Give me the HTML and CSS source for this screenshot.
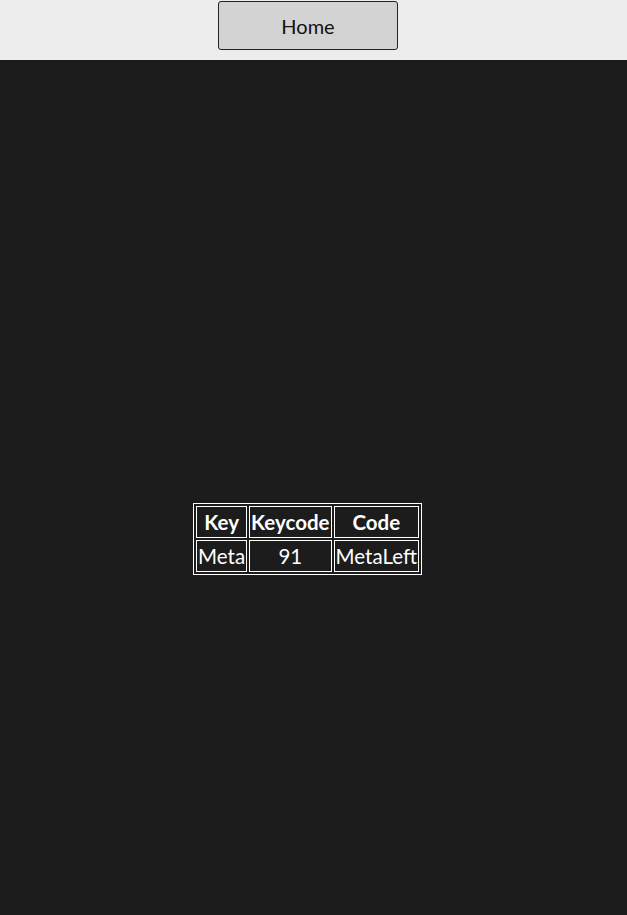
FILE: index.html
```html
<!DOCTYPE html>
<html>
<head>
<meta charset="utf-8">
<link rel="stylesheet" href="styles.css">
</head>
<body>
<header class="topbar">
  <button class="home-btn">Home</button>
</header>
<main class="content">
  <table class="keys">
    <tr><th>Key</th><th>Keycode</th><th>Code</th></tr>
    <tr><td>Meta</td><td>91</td><td>MetaLeft</td></tr>
  </table>
</main>
</body>
</html>
```
FILE: styles.css
```css
html, body {
  margin: 0;
  padding: 0;
  background: #1c1c1c;
  font-family: Lato, "Noto Sans", sans-serif;
}
.topbar {
  height: 60px;
  background: #ededed;
  border-bottom: 1px solid #1c1c1c;
  display: flex;
  justify-content: center;
  align-items: flex-start;
  padding-right: 11px;
}
.home-btn {
  margin-top: 1px;
  width: 180px;
  height: 49px;
  background: #d3d3d3;
  border: 1px solid #222;
  border-radius: 3px;
  font-family: Lato, "Noto Sans", sans-serif;
  font-size: 20px;
  color: #111;
  padding: 0;
}
.content {
  display: flex;
  justify-content: center;
  padding-top: 442px;
  padding-right: 12px;
}
.keys {
  border: 1px solid #fff;
  border-spacing: 2px;
  color: #fff;
  font-size: 20.5px;
}
.keys th, .keys td {
  border: 1px solid #fff;
  padding: 1px;
  line-height: 28px;
  text-align: center;
}
.keys td { font-weight: normal; }
```
